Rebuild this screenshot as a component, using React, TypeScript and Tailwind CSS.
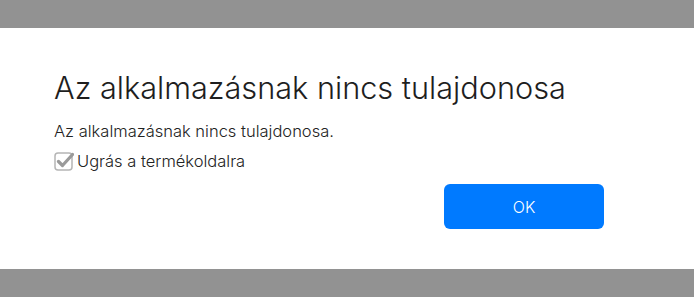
import React from "react";

function CheckIcon() {
  return (
    <svg width="20" height="20" viewBox="0 0 20 20" fill="none" xmlns="http://www.w3.org/2000/svg">
      <rect x="1" y="2" width="17" height="17" rx="3" stroke="#b5b5b5" strokeWidth="1.5" fill="#fff" />
      <path d="M4.5 10.5 L8.5 14.5 L18.5 3.5" stroke="#9a9a9a" strokeWidth="3.2" strokeLinecap="round" strokeLinejoin="round" />
    </svg>
  );
}

export default function App() {
  return (
    <div className="w-[694px] h-[297px] bg-[#929292] flex flex-col" style={{ fontFamily: "Inter, 'Noto Sans', sans-serif" }}>
      <div className="h-[28px]" />
      <div className="bg-white flex flex-col pl-[54px] pr-[90px] pt-[41px] pb-[40px]">
        <h1 className="text-[30.7px] leading-[38px] font-light text-[#1e1e1e]">Az alkalmazásnak nincs tulajdonosa</h1>
        <p className="mt-[14px] text-[16.5px] leading-[20px] font-light text-[#222]">Az alkalmazásnak nincs tulajdonosa.</p>
        <label className="mt-[10px] flex items-center gap-[3px] text-[16.5px] leading-[20px] font-light text-[#222]">
          <CheckIcon />
          <span>Ugrás a termékoldalra</span>
        </label>
        <div className="mt-[13px] flex justify-end">
          <button className="w-[160px] h-[45px] rounded-[6px] bg-[#007aff] text-white text-[16px] font-light">OK</button>
        </div>
      </div>
    </div>
  );
}
